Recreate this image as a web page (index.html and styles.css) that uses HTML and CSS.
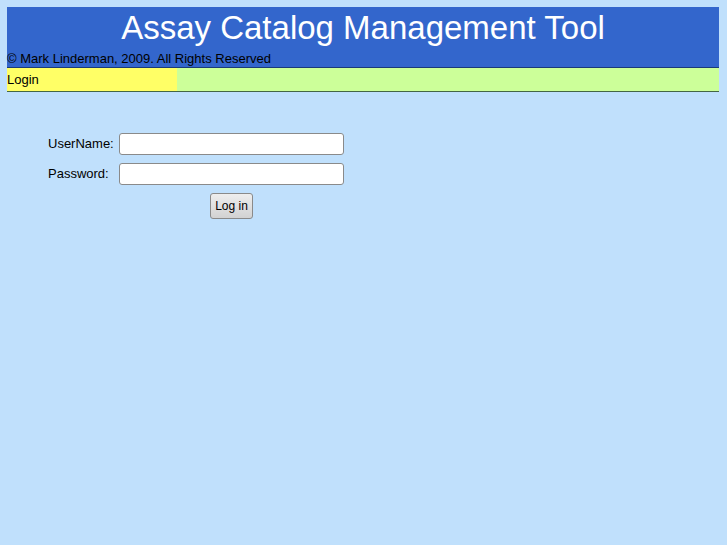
FILE: index.html
```html
<!DOCTYPE html>
<html>
<head>
<meta charset="utf-8">
<link rel="stylesheet" href="styles.css">
</head>
<body>
<div class="header">
  <div class="title">Assay Catalog Management Tool</div>
  <div class="copy">© Mark Linderman, 2009. All Rights Reserved</div>
</div>
<div class="nav">
  <div class="nav-item">Login</div>
</div>
<div class="login">
  <div class="row">
    <label class="lbl">UserName:</label>
    <input class="field" type="text">
  </div>
  <div class="row">
    <label class="lbl">Password:</label>
    <input class="field" type="password">
  </div>
  <div class="btn-row">
    <button class="btn">Log in</button>
  </div>
</div>
</body>
</html>
```
FILE: styles.css
```css
html, body {
  margin: 0;
  padding: 0;
}
body {
  background: #c0e0fc;
  font-family: "Liberation Sans", Arial, sans-serif;
  color: #000;
  padding: 7px 8px 0 7px;
}
.header {
  background: #3366cc;
  height: 60px;
  border-bottom: 1px solid #1a3a7a;
  display: flex;
  flex-direction: column;
}
.title {
  color: #fff;
  font-size: 33px;
  text-align: center;
  line-height: 38px;
  padding-top: 2px;
}
.copy {
  font-size: 13px;
  line-height: 15px;
  margin-top: 4px;
  color: #000;
}
.nav {
  background: #ccff99;
  height: 23px;
  border-bottom: 1px solid #446644;
  display: flex;
}
.nav-item {
  width: 170px;
  background: #ffff66;
  font-size: 13px;
  line-height: 23px;
}
.login {
  padding: 41px 0 0 41px;
}
.row {
  display: flex;
  align-items: center;
  height: 22px;
  margin-bottom: 8px;
}
.lbl {
  width: 71px;
  font-size: 13px;
  line-height: 14px;
}
.field {
  box-sizing: border-box;
  width: 225px;
  height: 22px;
  margin: 0;
  border: 1px solid #8a8a8a;
  border-radius: 3px;
  background: #fff;
}
.btn-row {
  padding-left: 162px;
}
.btn {
  box-sizing: border-box;
  width: 43px;
  height: 26px;
  margin: 0;
  padding: 0;
  font-family: "Liberation Sans", Arial, sans-serif;
  font-size: 12px;
  border: 1px solid #8a8a8a;
  border-radius: 3px;
  background: linear-gradient(#eeeeee, #d2d2d2);
  color: #000;
}
```
